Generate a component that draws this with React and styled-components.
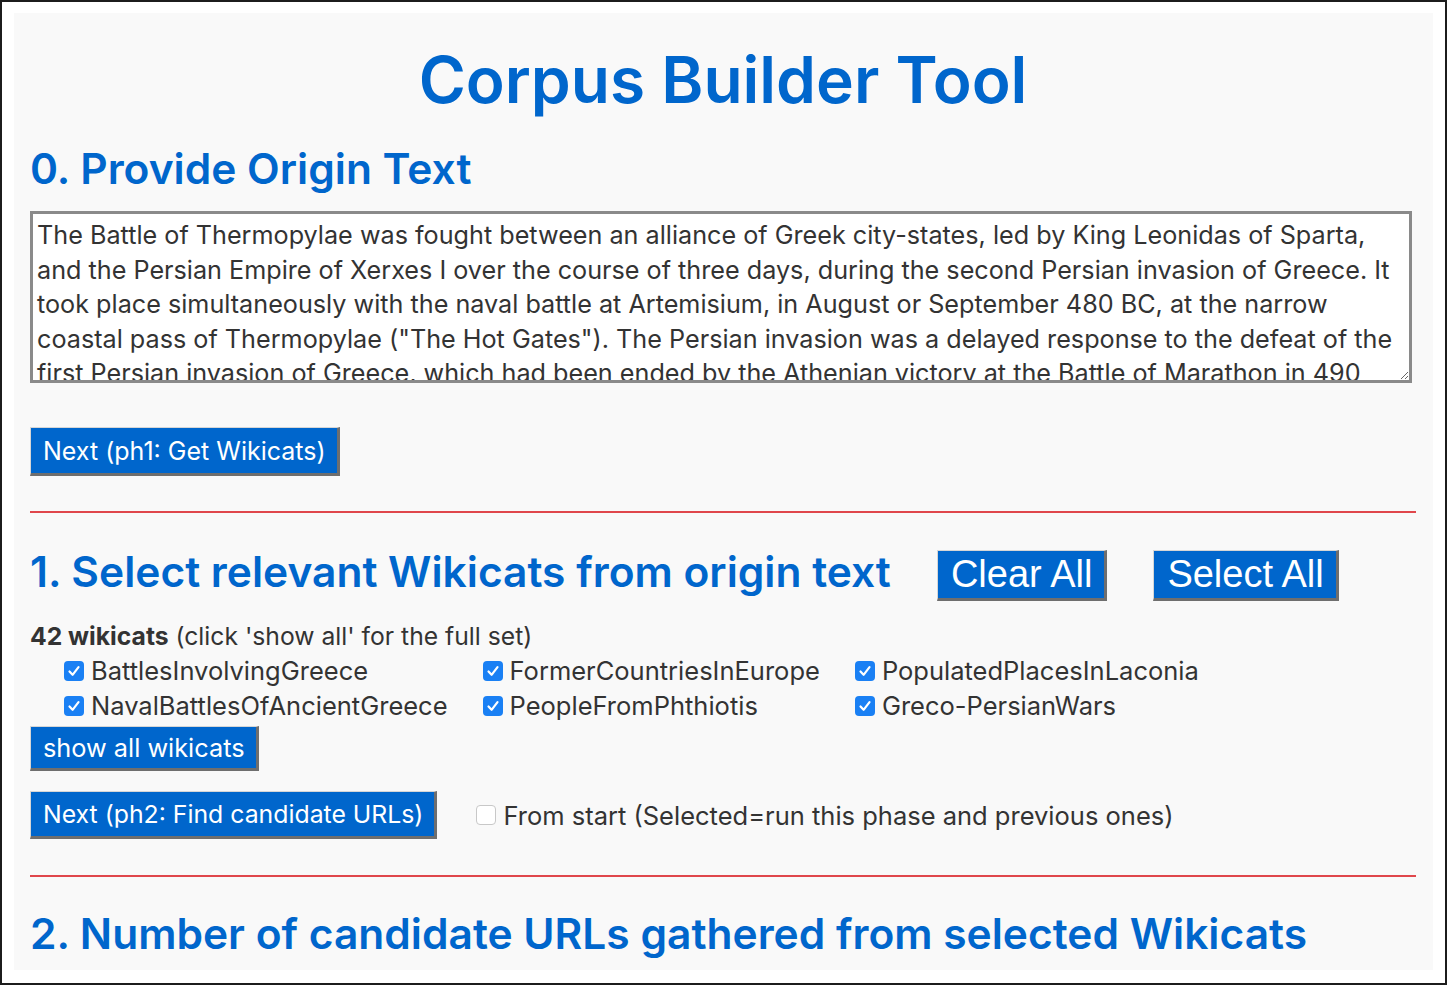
import { useState } from "react";
import styled, { createGlobalStyle } from "styled-components";

const GlobalStyle = createGlobalStyle`
  html, body {
    margin: 0;
    padding: 0;
    background: #ffffff;
  }
  body {
    font-family: Inter, "Open Sans", sans-serif;
    color: #333333;
  }
`;

const StyledFrame = styled.div`
  box-sizing: border-box;
  width: 1447px;
  height: 985px;
  border: 2px solid #1c1c1c;
  padding: 11px 12px 13px 12px;
  background: #ffffff;
  overflow: hidden;
`;

const StyledPage = styled.main`
  box-sizing: border-box;
  height: 100%;
  padding: 31px 17px 0 16px;
  background: #f9f9f9;
  overflow: hidden;
`;

const StyledTitle = styled.h1`
  margin: 0 0 28px 0;
  font-size: 64px;
  line-height: 72px;
  font-weight: 600;
  text-align: center;
  color: #0066cc;
`;

const StyledHeading = styled.h2`
  margin: 0;
  font-size: 42.5px;
  line-height: 50px;
  font-weight: 600;
  color: #0066cc;
  white-space: nowrap;
`;

const StyledTextArea = styled.textarea`
  display: block;
  box-sizing: border-box;
  width: 1382px;
  height: 172px;
  margin: 17px 0 44px 0;
  padding: 4px 4px 0 4px;
  border: 3px solid #8a8a8a;
  background: #ffffff;
  color: #333333;
  font-family: inherit;
  font-size: 25.2px;
  line-height: 34.5px;
  white-space: pre;
  overflow: hidden;
  resize: both;

  &:focus {
    outline: none;
  }
`;

const StyledButton = styled.button`
  display: block;
  box-sizing: border-box;
  height: ${(p) => p.h || 48}px;
  padding: 0 11px 0 12px;
  background: #0066cc;
  color: #ffffff;
  font-family: inherit;
  font-size: ${(p) => p.fs || 25}px;
  white-space: nowrap;
  border-top: 1px solid #d6d6d6;
  border-left: 1px solid #d6d6d6;
  border-right: 3px solid #6e6e6e;
  border-bottom: 3px solid #6e6e6e;
  border-radius: 0;
  cursor: pointer;
`;

const StyledBigButton = styled(StyledButton)`
  height: 51px;
  margin-top: 3px;
  padding: 0 12px 0 13px;
  font-family: "Liberation Sans", Arial, sans-serif;
  font-size: 38px;
`;

const StyledRule = styled.hr`
  height: 0;
  margin: ${(p) => p.m || "35px"} 0 0 0;
  border: none;
  border-top: 2px solid #e0474c;
`;

const StyledHeadRow = styled.div`
  display: flex;
  align-items: flex-start;
  gap: 46px;
  margin-top: ${(p) => p.mt || 34}px;
`;

const StyledCount = styled.p`
  margin: 18px 0 0 0;
  font-size: 24.7px;
  line-height: 34px;
`;

const StyledGrid = styled.div`
  display: grid;
  grid-template-columns: repeat(3, max-content);
  column-gap: 35px;
  margin-left: 34px;
  margin-bottom: 3px;
`;

const StyledLabel = styled.label`
  display: flex;
  align-items: center;
  gap: 7px;
  height: 35px;
  font-size: 25.5px;
  color: #333333;
  white-space: nowrap;
  cursor: pointer;
`;

const StyledBox = styled.span`
  display: inline-flex;
  flex: none;
  align-items: center;
  justify-content: center;
  box-sizing: border-box;
  width: 20px;
  height: 20px;
  border-radius: 4px;
  background: ${(p) => (p.checked ? "#1a80f4" : "#ffffff")};
  border: ${(p) => (p.checked ? "none" : "1px solid #c8c8c8")};
`;

const StyledActionRow = styled.div`
  display: flex;
  align-items: center;
  gap: 39px;
  margin-top: 20px;
`;

function CheckBox({ checked, onClick }) {
  return (
    <StyledBox checked={checked} onClick={onClick}>
      {checked && (
        <svg width="14" height="14" viewBox="0 0 14 14">
          <path
            d="M2.5 7.5 L5.6 10.8 L11.5 3.2"
            fill="none"
            stroke="#ffffff"
            strokeWidth="2.2"
            strokeLinecap="round"
            strokeLinejoin="round"
          />
        </svg>
      )}
    </StyledBox>
  );
}

const originText = `The Battle of Thermopylae was fought between an alliance of Greek city-states, led by King Leonidas of Sparta,
and the Persian Empire of Xerxes I over the course of three days, during the second Persian invasion of Greece. It
took place simultaneously with the naval battle at Artemisium, in August or September 480 BC, at the narrow
coastal pass of Thermopylae ("The Hot Gates"). The Persian invasion was a delayed response to the defeat of the
first Persian invasion of Greece, which had been ended by the Athenian victory at the Battle of Marathon in 490
BC.`;

const wikicats = [
  "BattlesInvolvingGreece",
  "FormerCountriesInEurope",
  "PopulatedPlacesInLaconia",
  "NavalBattlesOfAncientGreece",
  "PeopleFromPhthiotis",
  "Greco-PersianWars",
];

function App() {
  const [selected, setSelected] = useState(wikicats.map(() => true));
  const [fromStart, setFromStart] = useState(false);

  let toggle = (i) => {
    setSelected(selected.map((v, j) => (j === i ? !v : v)));
  };

  return (
    <>
      <GlobalStyle />
      <StyledFrame>
        <StyledPage>
          <StyledTitle>Corpus Builder Tool</StyledTitle>
          <StyledHeading>0. Provide Origin Text</StyledHeading>
          <StyledTextArea defaultValue={originText} />
          <StyledButton h={49}>Next (ph1: Get Wikicats)</StyledButton>
          <StyledRule />

          <StyledHeadRow>
            <StyledHeading>1. Select relevant Wikicats from origin text</StyledHeading>
            <StyledBigButton onClick={() => setSelected(wikicats.map(() => false))}>
              Clear All
            </StyledBigButton>
            <StyledBigButton onClick={() => setSelected(wikicats.map(() => true))}>
              Select All
            </StyledBigButton>
          </StyledHeadRow>
          <StyledCount>
            <b>42 wikicats</b> (click 'show all' for the full set)
          </StyledCount>
          <StyledGrid>
            {wikicats.map((w, i) => (
              <StyledLabel key={w}>
                <CheckBox checked={selected[i]} onClick={() => toggle(i)} />
                {w}
              </StyledLabel>
            ))}
          </StyledGrid>
          <StyledButton h={45} fs={25.3}>show all wikicats</StyledButton>
          <StyledActionRow>
            <StyledButton h={48} fs={24.8}>Next (ph2: Find candidate URLs)</StyledButton>
            <StyledLabel>
              <CheckBox checked={fromStart} onClick={() => setFromStart(!fromStart)} />
              From start (Selected=run this phase and previous ones)
            </StyledLabel>
          </StyledActionRow>
          <StyledRule m="36px" />
          <StyledHeadRow mt={32}>
            <StyledHeading>2. Number of candidate URLs gathered from selected Wikicats</StyledHeading>
          </StyledHeadRow>
        </StyledPage>
      </StyledFrame>
    </>
  );
}

export default App;
